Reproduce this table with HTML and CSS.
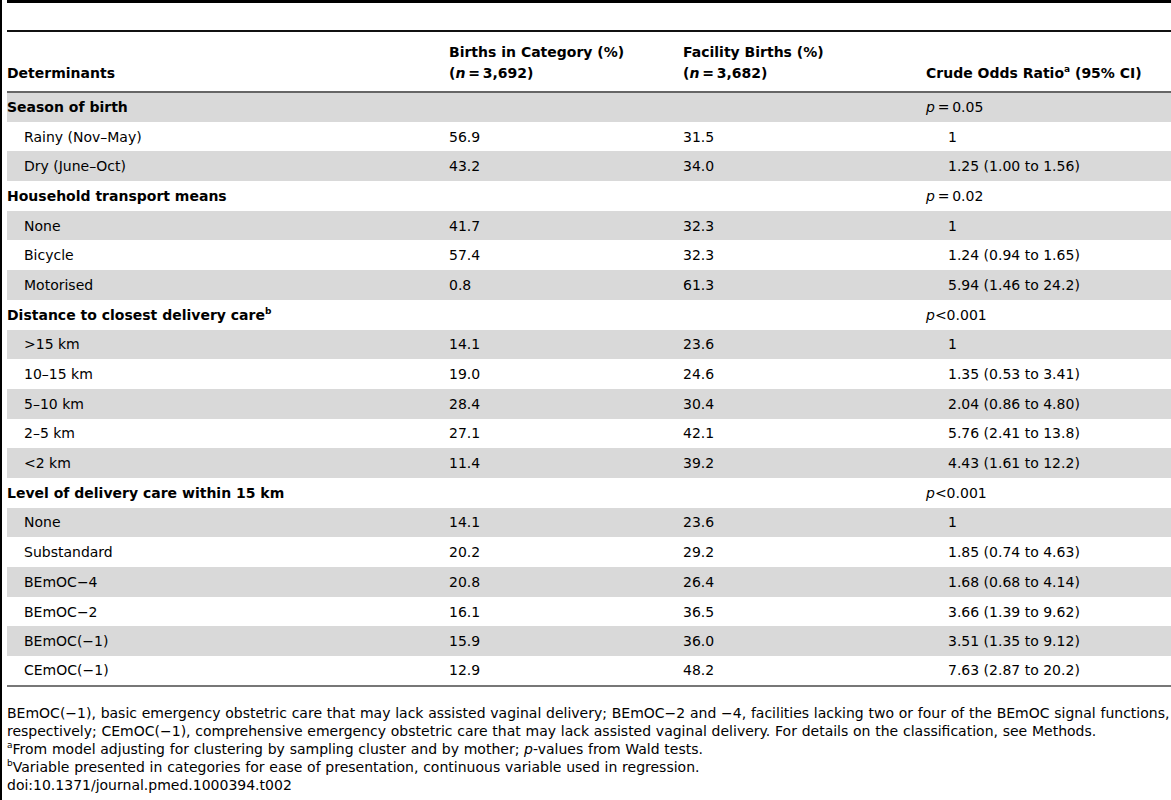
FILE: index.html
```html
<!DOCTYPE html>
<html>
<head>
<meta charset="utf-8">
<link rel="stylesheet" href="styles.css">
</head>
<body>
<div class="page">
  <table class="tbl">
    <colgroup>
      <col class="c1"><col class="c2"><col class="c3"><col class="c4">
    </colgroup>
    <thead>
      <tr class="caprow"><th colspan="4"></th></tr>
      <tr class="head">
        <th>Determinants</th>
        <th>Births in Category (%)<br>(<i>n</i>&thinsp;=&thinsp;3,692)</th>
        <th>Facility Births (%)<br>(<i>n</i>&thinsp;=&thinsp;3,682)</th>
        <th>Crude Odds Ratio<sup>a</sup> (95% CI)</th>
      </tr>
    </thead>
    <tbody>
      <tr class="g"><td class="grp">Season of birth</td><td></td><td></td><td class="pv"><i>p</i>&thinsp;=&thinsp;0.05</td></tr>
      <tr><td class="sub">Rainy (Nov–May)</td><td>56.9</td><td>31.5</td><td class="or">1</td></tr>
      <tr class="g"><td class="sub">Dry (June–Oct)</td><td>43.2</td><td>34.0</td><td class="or">1.25 (1.00 to 1.56)</td></tr>
      <tr><td class="grp">Household transport means</td><td></td><td></td><td class="pv"><i>p</i>&thinsp;=&thinsp;0.02</td></tr>
      <tr class="g"><td class="sub">None</td><td>41.7</td><td>32.3</td><td class="or">1</td></tr>
      <tr><td class="sub">Bicycle</td><td>57.4</td><td>32.3</td><td class="or">1.24 (0.94 to 1.65)</td></tr>
      <tr class="g"><td class="sub">Motorised</td><td>0.8</td><td>61.3</td><td class="or">5.94 (1.46 to 24.2)</td></tr>
      <tr><td class="grp">Distance to closest delivery care<sup>b</sup></td><td></td><td></td><td class="pv"><i>p</i>&lt;0.001</td></tr>
      <tr class="g"><td class="sub">&gt;15 km</td><td>14.1</td><td>23.6</td><td class="or">1</td></tr>
      <tr><td class="sub">10–15 km</td><td>19.0</td><td>24.6</td><td class="or">1.35 (0.53 to 3.41)</td></tr>
      <tr class="g"><td class="sub">5–10 km</td><td>28.4</td><td>30.4</td><td class="or">2.04 (0.86 to 4.80)</td></tr>
      <tr><td class="sub">2–5 km</td><td>27.1</td><td>42.1</td><td class="or">5.76 (2.41 to 13.8)</td></tr>
      <tr class="g"><td class="sub">&lt;2 km</td><td>11.4</td><td>39.2</td><td class="or">4.43 (1.61 to 12.2)</td></tr>
      <tr><td class="grp">Level of delivery care within 15 km</td><td></td><td></td><td class="pv"><i>p</i>&lt;0.001</td></tr>
      <tr class="g"><td class="sub">None</td><td>14.1</td><td>23.6</td><td class="or">1</td></tr>
      <tr><td class="sub">Substandard</td><td>20.2</td><td>29.2</td><td class="or">1.85 (0.74 to 4.63)</td></tr>
      <tr class="g"><td class="sub">BEmOC−4</td><td>20.8</td><td>26.4</td><td class="or">1.68 (0.68 to 4.14)</td></tr>
      <tr><td class="sub">BEmOC−2</td><td>16.1</td><td>36.5</td><td class="or">3.66 (1.39 to 9.62)</td></tr>
      <tr class="g"><td class="sub">BEmOC(−1)</td><td>15.9</td><td>36.0</td><td class="or">3.51 (1.35 to 9.12)</td></tr>
      <tr class="last"><td class="sub">CEmOC(−1)</td><td>12.9</td><td>48.2</td><td class="or">7.63 (2.87 to 20.2)</td></tr>
    </tbody>
  </table>
  <div class="notes">
    <p>BEmOC(−1), basic emergency obstetric care that may lack assisted vaginal delivery; BEmOC−2 and −4, facilities lacking two or four of the BEmOC signal functions, respectively; CEmOC(−1), comprehensive emergency obstetric care that may lack assisted vaginal delivery. For details on the classification, see Methods.</p>
    <p><sup>a</sup>From model adjusting for clustering by sampling cluster and by mother; <i>p</i>-values from Wald tests.</p>
    <p><sup>b</sup>Variable presented in categories for ease of presentation, continuous variable used in regression.</p>
    <p>doi:10.1371/journal.pmed.1000394.t002</p>
  </div>
</div>
</body>
</html>
```

FILE: styles.css
```css
html, body {
  margin: 0;
  padding: 0;
  background: #fff;
}
body {
  font-family: "DejaVu Sans", "Open Sans", sans-serif;
  font-size: 14px;
  color: #000;
}
.page {
  border-left: 2px solid #000;
  padding-left: 5px;
  min-height: 800px;
  box-sizing: border-box;
}
.tbl {
  width: 1164px;
  border-collapse: collapse;
  table-layout: fixed;
}
.c1 { width: 442px; }
.c2 { width: 234px; }
.c3 { width: 243px; }
.c4 { width: 245px; }
.tbl th, .tbl td {
  padding: 0;
  text-align: left;
  vertical-align: middle;
  font-weight: normal;
}
.tbl .caprow th {
  height: 27px;
  border-top: 3px solid #000;
  border-bottom: 2px solid #111;
}
.tbl .head th {
  height: 52px;
  font-weight: bold;
  vertical-align: bottom;
  line-height: 21px;
  padding-bottom: 7px;
  border-bottom: 2px solid #666;
}
sup {
  font-size: 9px;
  line-height: 0;
  vertical-align: 6px;
}
.tbl tbody tr { height: 29.7px; }
.tbl tbody tr.g td { background: #d9d9d9; }
.tbl tbody tr.last td { border-bottom: 2px solid #777; }
.tbl td.grp { font-weight: bold; }
.tbl td.sub { padding-left: 17px; }
.tbl td.or { padding-left: 22px; }
.notes {
  padding-top: 17px;
  line-height: 18px;
  word-spacing: 0.3px;
}
.notes p { margin: 0; }
```
